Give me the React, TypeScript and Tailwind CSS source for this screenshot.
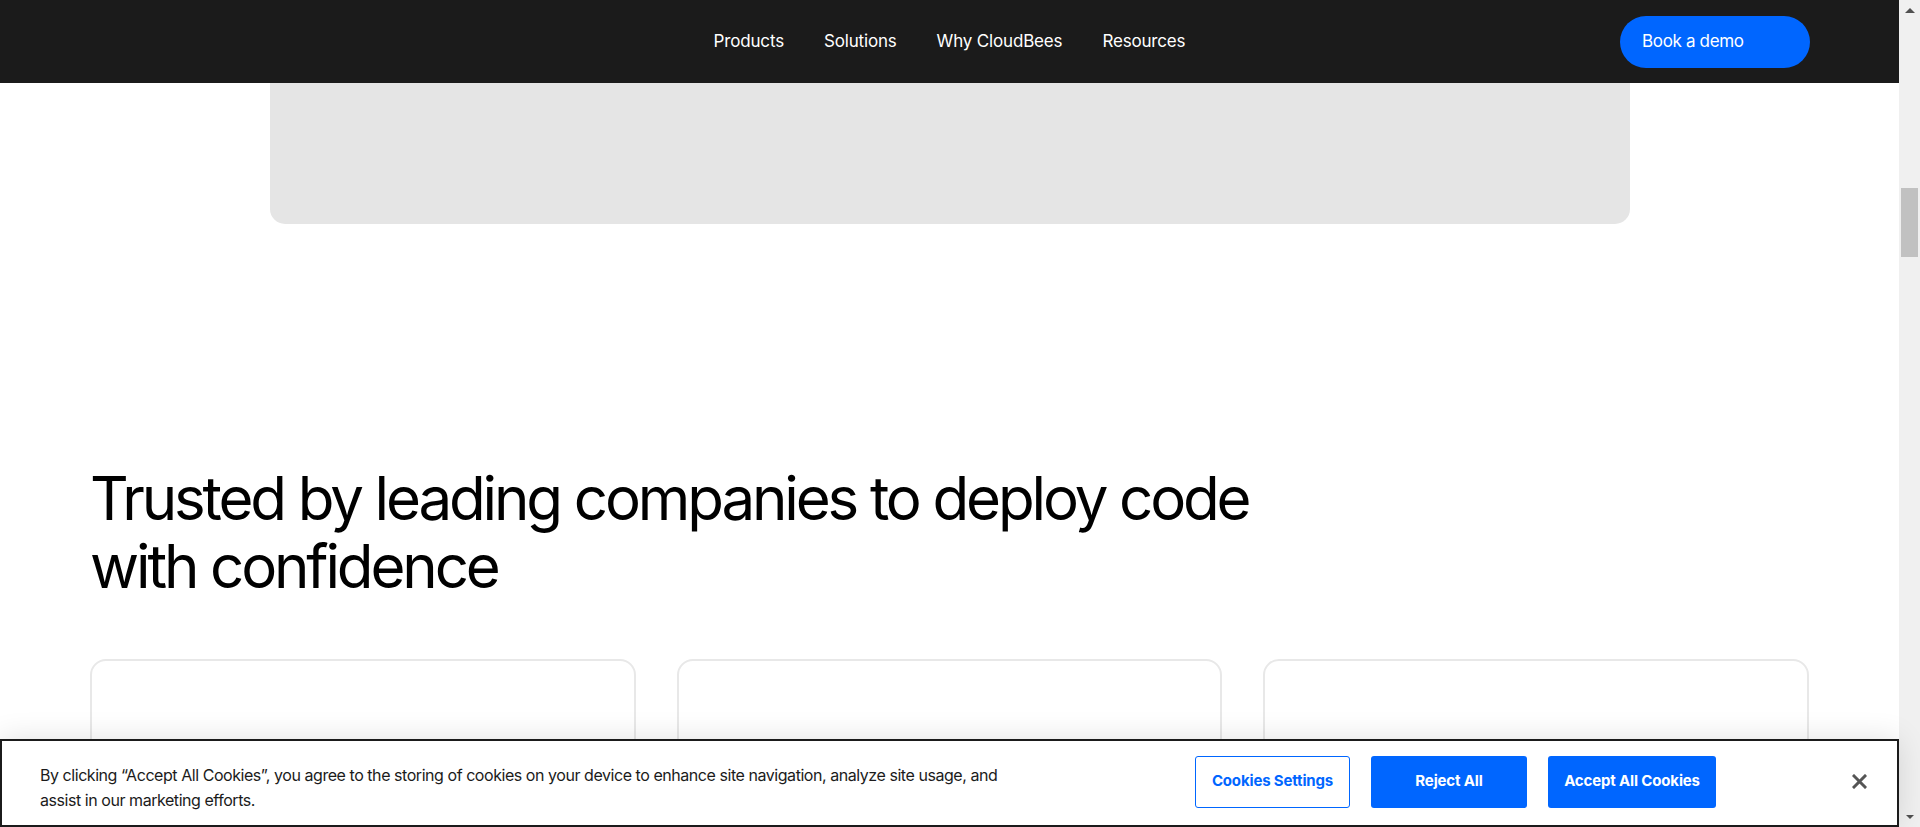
const navLinks = ['Products', 'Solutions', 'Why CloudBees', 'Resources'];

function Scrollbar() {
  return (
    <div className="w-[21px] shrink-0 bg-[#f0f0f0] flex flex-col">
      <div className="h-[21px] shrink-0 flex items-center justify-center">
        <div className="w-0 h-0 border-x-[5px] border-x-transparent border-b-[5px] border-b-[#505050]" />
      </div>
      <div className="shrink-0 mt-[167px] mx-[2px] h-[69px] bg-[#c1c1c1]" />
      <div className="flex-1" />
      <div className="h-[21px] shrink-0 flex items-center justify-center">
        <div className="w-0 h-0 border-x-[4px] border-x-transparent border-t-[4px] border-t-[#505050]" />
      </div>
    </div>
  );
}

function CookieBanner() {
  return (
    <div className="absolute bottom-0 inset-x-0 h-[88px] bg-white border-2 border-[#1b1b1b] shadow-[0_0_30px_rgba(0,0,0,0.12)] flex items-center pl-[38px] pr-[30px] pb-[3px]">
      <p className="w-[990px] mt-[12px] text-[16px] leading-[25px] tracking-[-0.028em] text-[#1b1b1b]">
        By clicking “Accept All Cookies”, you agree to the storing of cookies on your device to enhance site navigation, analyze site usage, and assist in our marketing efforts.
      </p>
      <div className="ml-auto flex items-center gap-[21px] text-[15px] font-bold tracking-[-0.01em]">
        <button className="h-[52px] min-w-[155px] px-[13px] rounded-[3px] border border-[#0066ff] bg-white text-[#0066ff]">
          Cookies Settings
        </button>
        <button className="h-[52px] min-w-[156px] px-[13px] rounded-[3px] bg-[#0066ff] text-white">
          Reject All
        </button>
        <button className="h-[52px] min-w-[168px] px-[13px] rounded-[3px] bg-[#0066ff] text-white">
          Accept All Cookies
        </button>
      </div>
      <button className="ml-[136px] w-[15px] h-[15px] text-[#555]" aria-label="Close">
        <svg viewBox="0 0 15 15" className="w-[15px] h-[15px]">
          <path d="M2 2 L13 13 M13 2 L2 13" stroke="currentColor" strokeWidth="3" strokeLinecap="square" />
        </svg>
      </button>
    </div>
  );
}

export default function App() {
  return (
    <div className="h-screen overflow-hidden flex bg-white font-['Inter',sans-serif]">
      <div className="flex-1 relative flex flex-col min-w-0">
        <header className="h-[83px] shrink-0 bg-[#1b1b1b] flex items-center px-[89px] relative">
          <nav className="absolute left-1/2 -translate-x-1/2 flex items-center gap-[40px] text-white text-[17px] tracking-[-0.01em]">
            {navLinks.map((l) => (
              <a key={l} href="#">{l}</a>
            ))}
          </nav>
          <a href="#" className="ml-auto w-[190px] h-[52px] rounded-full bg-[#0066ff] text-white text-[17px] tracking-[-0.02em] flex items-center pl-[22px]">
            Book a demo
          </a>
        </header>

        <div className="shrink-0 mx-auto w-[1360px] h-[141px] bg-[#e5e5e5] rounded-b-[15px]" />

        <section className="shrink-0 px-[90px] pt-[240px]">
          <h2 className="max-w-[1200px] text-[60px] leading-[68px] tracking-[-0.052em] text-black">
            Trusted by leading companies to deploy code with confidence
          </h2>
          <div className="mt-[59px] grid grid-cols-3 gap-[41px]">
            <div className="h-[300px] rounded-[16px] border-2 border-[#e8e8e8]" />
            <div className="h-[300px] rounded-[16px] border-2 border-[#e8e8e8]" />
            <div className="h-[300px] rounded-[16px] border-2 border-[#e8e8e8]" />
          </div>
        </section>

        <CookieBanner />
      </div>
      <Scrollbar />
    </div>
  );
}
